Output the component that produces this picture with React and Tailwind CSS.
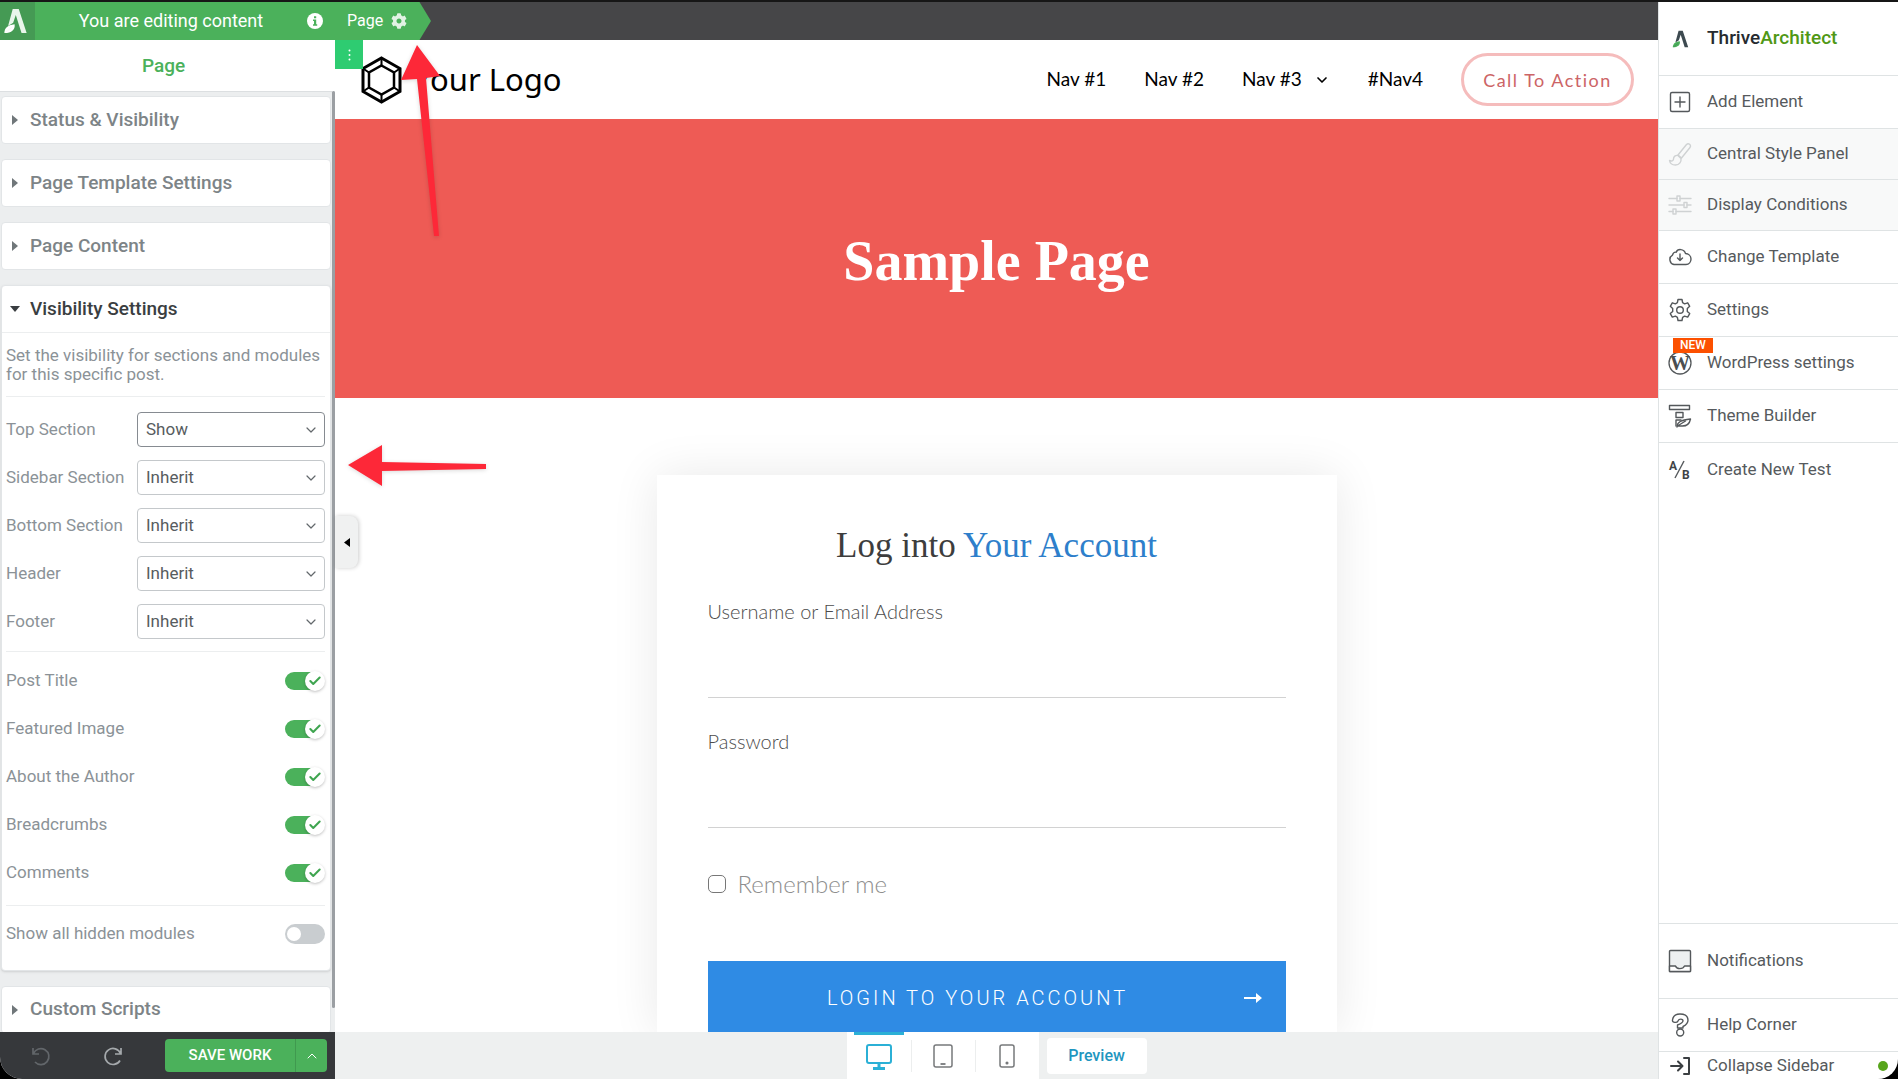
import { useState } from 'react';
import { FaCog } from 'react-icons/fa';
import { ChevronDown, ChevronUp, Check } from 'lucide-react';

const sections = ['Top Section', 'Sidebar Section', 'Bottom Section', 'Header', 'Footer'];
const modules = ['Post Title', 'Featured Image', 'About the Author', 'Breadcrumbs', 'Comments'];

function ThriveMark({ className, leaf }) {
  return (
    <svg className={className} viewBox="0 0 24 28" fill="currentColor">
      <path d="M9 1h6.500L24 27h-5.500L12.300 7.500 9.500 16l-5.500 3.500z" />
      <path className={leaf} d="M0 27c0-5 3-8.500 11-9.500 1 5.500-3 9.500-11 9.500z" />
      <path d="M1 26.500 8.500 20.500" stroke="currentColor" strokeWidth="0.800" opacity="0.500" />
    </svg>
  );
}

function Icon({ children, className = 'text-[#54585b]' }) {
  return (
    <svg className={`h-6 w-6 shrink-0 ${className}`} viewBox="0 0 24 24" fill="none" stroke="currentColor" strokeWidth="1.4" strokeLinecap="round" strokeLinejoin="round">
      {children}
    </svg>
  );
}

const menu = [
  {
    label: 'Add Element',
    icon: <Icon><rect x="2.5" y="2.5" width="19" height="19" rx="1.5" /><path d="M12 7v10M7 12h10" /></Icon>,
  },
  {
    label: 'Central Style Panel',
    disabled: true,
    icon: (
      <Icon className="text-[#cfd2d3]">
        <path d="M10 13 18.500 2.500c2-2 5 .5 3.500 3L13.500 16z" />
        <path d="M10 13.500c-2.500-.5-4.500 1-4.500 3.500 0 2-2 2.500-4 1.500.5 3 3 4.500 6 4.500 4 0 6-3.500 5.500-6.500z" />
      </Icon>
    ),
  },
  {
    label: 'Display Conditions',
    disabled: true,
    icon: (
      <Icon className="text-[#cfd2d3]">
        <path d="M1 5.500h8M12 5.500h11M1 12h15M19 12h4M1 18.500h4M8 18.500h15" />
        <rect x="9" y="3" width="3" height="5" /><rect x="16" y="9.500" width="3" height="5" /><rect x="5" y="16" width="3" height="5" />
      </Icon>
    ),
  },
  {
    label: 'Change Template',
    icon: (
      <Icon>
        <path d="M6 19.500a5 5 0 0 1-1.500-9.300C5 8 6.500 7 8.200 7.200 9.500 3.500 16 3.500 17.500 8.500c3 .2 5.500 2.500 5.500 5.500s-2 5.500-5 5.500z" />
        <path d="M12 9v6.500M9.500 13l2.500 2.500 2.500-2.500" />
      </Icon>
    ),
  },
  {
    label: 'Settings',
    icon: (
      <Icon>
        <circle cx="12" cy="12" r="3.300" />
        <path d="M10 1.500h4l.6 3.200 2 1.100 3.100-1 2 3.500-2.400 2.200v2.900l2.400 2.200-2 3.500-3.100-1-2 1.200-.6 3.200h-4l-.6-3.200-2-1.200-3.100 1-2-3.500 2.400-2.200v-2.900L2.300 8.300l2-3.500 3.100 1 2-1.100z" />
      </Icon>
    ),
  },
  {
    label: 'WordPress settings',
    isNew: true,
    icon: (
      <svg className="h-6 w-6 shrink-0 fill-[#4a4e51] font-['Liberation_Serif'] text-[20px] font-bold" viewBox="0 0 24 24">
        <circle cx="12" cy="12" r="11" fill="none" stroke="#54585b" strokeWidth="1.3" />
        <text x="12" y="19" textAnchor="middle">W</text>
      </svg>
    ),
  },
  {
    label: 'Theme Builder',
    icon: (
      <Icon>
        <path d="M1.500 1.500h20v4h-20zM8 8.500h7v5H8zM8 16v6M8 16h5" />
        <path d="M9 23c0-5 4-7 13.500-8-1 5-4 7.500-9.500 7H9.500l8-5" />
      </Icon>
    ),
  },
  {
    label: 'Create New Test',
    icon: (
      <svg className="h-6 w-6 shrink-0 fill-[#3f4346] font-[Roboto] text-[12px] font-bold" viewBox="0 0 24 24">
        <text x="1" y="12">A</text>
        <path d="M16 3 7 20" stroke="#54585b" strokeWidth="1.4" />
        <text x="14" y="21">B</text>
      </svg>
    ),
  },
];

function Accordion({ title }) {
  return (
    <section className="mx-px rounded-[4px] border border-[#e2e5e7] bg-white">
      <button className="flex h-[46px] w-full items-center gap-3 px-[10px] text-[19px] font-medium text-[#7d8487]">
        <svg className="h-[10px] w-[6px] fill-[#70777a]" viewBox="0 0 6 10"><path d="M0 0 6 5 0 10z" /></svg>
        {title}
      </button>
    </section>
  );
}

function Toggle({ id, checked, onChange }) {
  return (
    <span className="relative flex h-5 w-10 items-center">
      <input
        id={id}
        type="checkbox"
        checked={checked}
        onChange={onChange}
        className="h-5 w-10 appearance-none rounded-full bg-[#c9cdd0] checked:h-[18px] checked:w-9 checked:bg-[#4bb15b]"
      />
      {checked ? (
        <span className="pointer-events-none absolute right-0 flex h-5 w-5 items-center justify-center rounded-full bg-white shadow-[0_1px_3px_rgba(0,0,0,0.25)]">
          <Check className="h-[14px] w-[14px] text-[#3fa550]" strokeWidth={3.5} />
        </span>
      ) : (
        <span className="pointer-events-none absolute left-[2px] h-[14px] w-[14px] rounded-full bg-white" />
      )}
    </span>
  );
}

function SettingsPanel() {
  const [values, setValues] = useState({ 'Top Section': 'Show' });
  const [enabled, setEnabled] = useState(modules);
  const [showHidden, setShowHidden] = useState(false);

  const toggleModule = (name) => {
    setEnabled(enabled.includes(name) ? enabled.filter((m) => m !== name) : [...enabled, name]);
  };

  return (
    <aside className="flex w-[335px] shrink-0 flex-col rounded-bl-[22px] bg-white">
      <div className="flex h-[38px] shrink-0 items-center bg-[#4bb15b] text-white">
        <div className="flex h-full w-[35px] items-center justify-center bg-[#459a54] pr-1">
          <ThriveMark className="h-[26px] w-[23px] text-[#e9f5eb]" leaf="fill-white" />
        </div>
        <p className="flex-1 text-center text-lg">You are editing content</p>
        <button aria-label="Info" className="mr-3">
          <svg className="h-4 w-4" viewBox="0 0 16 16">
            <circle cx="8" cy="8" r="8" fill="white" />
            <path d="M7 3.200h2.200v2H7zM6 6.500h3.200v4.800h1v1.500H6v-1.500h1V8H6z" fill="#4bb15b" />
          </svg>
        </button>
      </div>
      <h2 className="h-[51px] shrink-0 pr-2 text-center text-[19px] leading-[52px] font-medium text-[#4bb15b]">Page</h2>

      <div className="flex min-h-0 flex-1 bg-[#eceeef]">
        <div className="flex min-w-0 flex-1 flex-col gap-[15px] overflow-hidden border-t border-[#dcdfe1] pt-1">
          <Accordion title="Status & Visibility" />
          <Accordion title="Page Template Settings" />
          <Accordion title="Page Content" />

          <section className="mx-px rounded-[4px] border border-[#e2e5e7] bg-white text-[#8b9297] shadow-sm">
            <button className="flex h-[47px] w-full items-center gap-[10px] border-b border-[#eceeef] px-2 text-[19px] font-medium text-[#3a3e41]">
              <svg className="h-[6px] w-[10px] fill-[#3a3e41]" viewBox="0 0 10 6"><path d="M0 0h10L5 6z" /></svg>
              Visibility Settings
            </button>
            <div className="pr-[5px] pl-1 text-[17px]">
              <p className="border-b border-[#eceeef] pt-[13px] pb-3 leading-[19px]">
                Set the visibility for sections and modules for this specific post.
              </p>
              <div className="flex flex-col gap-[13px] border-b border-[#eceeef] pt-[15px] pb-3">
                {sections.map((name) => (
                  <div key={name} className="flex h-[35px] items-center">
                    <label htmlFor={name} className="w-[131px] shrink-0">{name}</label>
                    <div className="relative flex-1">
                      <select
                        id={name}
                        value={values[name] || 'Inherit'}
                        onChange={(e) => setValues({ ...values, [name]: e.target.value })}
                        className={`h-[35px] w-full appearance-none rounded-[4px] border bg-white px-2 text-[17px] text-[#575c60] outline-none ${
                          values[name] ? 'border-[#868b91]' : 'border-[#c4c8cb]'
                        }`}
                      >
                        <option>Inherit</option>
                        <option>Show</option>
                        <option>Hide</option>
                      </select>
                      <ChevronDown className="pointer-events-none absolute top-[10px] right-[6px] h-4 w-4 text-[#63686c]" strokeWidth={1.8} />
                    </div>
                  </div>
                ))}
              </div>
              <div className="border-b border-[#eceeef] pt-[5px] pb-2">
                {modules.map((name) => (
                  <div key={name} className="flex h-12 items-center justify-between">
                    <label htmlFor={name}>{name}</label>
                    <Toggle id={name} checked={enabled.includes(name)} onChange={() => toggleModule(name)} />
                  </div>
                ))}
              </div>
              <div className="flex items-center justify-between pt-[15px] pb-[23px]">
                <label htmlFor="hidden-modules">Show all hidden modules</label>
                <Toggle id="hidden-modules" checked={showHidden} onChange={() => setShowHidden(!showHidden)} />
              </div>
            </div>
          </section>

          <Accordion title="Custom Scripts" />
        </div>
        <div className="mb-6 w-[3px] shrink-0 rounded-full bg-[#9b9fa3]" />
      </div>

      <div className="flex h-[47px] shrink-0 items-center rounded-bl-[22px] bg-[#36383b] pr-2">
        <button aria-label="Undo" className="ml-[31px] text-[#62666a]">
          <svg className="h-5 w-5" viewBox="0 0 20 20" fill="none" stroke="currentColor" strokeWidth="1.700">
            <path d="M2 2v6h6M2.500 7.500a8 8 0 1 1 1.500 8.500" />
          </svg>
        </button>
        <button aria-label="Redo" className="ml-[52px] text-[#a5a9ac]">
          <svg className="h-5 w-5" viewBox="0 0 20 20" fill="none" stroke="currentColor" strokeWidth="1.700">
            <path d="M18 2v6h-6M17.500 7.500a8 8 0 1 0-.5 7" />
          </svg>
        </button>
        <div className="ml-auto flex h-[33px] rounded-[4px] bg-[#4bb15b] text-white">
          <button className="w-[131px] border-r border-[#40994f] text-[15px] font-medium">SAVE WORK</button>
          <button aria-label="More save options" className="flex w-[31px] items-center justify-center"><ChevronUp className="h-4 w-4" strokeWidth={1.5} /></button>
        </div>
      </div>
    </aside>
  );
}

function SiteHeader() {
  return (
    <header className="relative flex h-[79px] shrink-0 items-center bg-white pr-6 pl-[26px] text-black">
      <button aria-label="Section menu" className="absolute top-0 left-0 flex h-[29px] w-7 items-center justify-center bg-[#2ecc71]">
        <svg className="h-3 w-[3px] fill-white" viewBox="0 0 3 12">
          <circle cx="1.500" cy="1.500" r="1" /><circle cx="1.500" cy="6" r="1" /><circle cx="1.500" cy="10.500" r="1" />
        </svg>
      </button>
      <a href="#" className="flex items-center gap-3 font-['Noto_Sans'] text-[31px]">
        <svg className="h-12 w-[41px]" viewBox="0 0 41 48" fill="none" stroke="black" strokeWidth="3">
          <path d="M20.500 2 39 12.500v23L20.500 46 2 35.500v-23z" />
          <path d="M20.500 9.500 33 16.500v15l-12.500 7-12.500-7v-15z" strokeWidth="2.500" />
          <path d="M20.500 2v7.500M39 12.500l-6 4M39 35.500l-6-4M20.500 46v-7.500M2 35.500l6-4M2 12.500l6 4" strokeWidth="2" />
        </svg>
        Your Logo
      </a>
      <nav className="ml-auto flex items-center gap-[38px] font-[Lato] text-[19px]">
        <a href="#">Nav #1</a>
        <a href="#">Nav #2</a>
        <a href="#" className="flex items-center gap-3">Nav #3 <ChevronDown className="h-4 w-4" strokeWidth={2.5} /></a>
        <a href="#">#Nav4</a>
        <a href="#" className="flex h-[53px] w-[173px] items-center justify-center rounded-[27px] border-[3px] border-[#f5bcbc] text-lg tracking-[1.5px] text-[#cc6466]">Call To Action</a>
      </nav>
    </header>
  );
}

function LoginForm() {
  return (
    <form className="mx-auto mt-[77px] w-[680px] max-w-full shrink-0 bg-white px-[51px] pt-12 font-[Lato] text-[#4c4c4c] shadow-[0_0_45px_rgba(0,0,0,0.09)]">
      <h2 className="text-center font-['Liberation_Serif'] text-[35px] leading-[46px] text-[#3d3d3d]">
        Log into <span className="text-[#2e7fcb]">Your Account</span>
      </h2>
      <label htmlFor="username" className="mt-7 block text-xl leading-7 font-light">Username or Email Address</label>
      <input id="username" type="text" className="h-[73px] w-full border-b border-[#d2d2d2] outline-none" />
      <label htmlFor="password" className="mt-[29px] block text-xl leading-7 font-light">Password</label>
      <input id="password" type="password" className="h-[73px] w-full border-b border-[#d2d2d2] outline-none" />
      <div className="mt-10 flex items-center gap-3 font-light text-[#8e8e8e]">
        <input id="remember" type="checkbox" className="h-[18px] w-[18px] appearance-none rounded-[5px] border border-[#777777]" />
        <label htmlFor="remember" className="text-2xl leading-8">Remember me</label>
      </div>
      <button type="button" className="mt-[61px] flex h-[74px] w-full items-center bg-[#2f8be4] pr-6 pl-1 text-white">
        <span className="flex-1 text-center font-[Roboto] text-xl font-light tracking-[3px]">LOGIN TO YOUR ACCOUNT</span>
        <svg className="h-3 w-[18px]" viewBox="0 0 18 12"><path d="M0 5h12V1l6 5-6 5V7H0z" fill="white" /></svg>
      </button>
    </form>
  );
}

function DeviceBar() {
  return (
    <footer className="flex h-[47px] shrink-0 items-center justify-center gap-2 bg-[#eef0f0]">
      <div className="grid h-full w-[192px] grid-cols-3 items-center bg-white">
        <button aria-label="Desktop" className="mx-[7px] flex h-full items-center justify-center border-t-[3px] border-[#2bb0d6] text-[#2bb0d6]">
          <svg className="h-[26px] w-[26px]" viewBox="0 0 26 26" fill="none" stroke="currentColor" strokeWidth="2">
            <rect x="1" y="1" width="24" height="18" rx="2" /><path d="M13 19v5M7 24.500h12" strokeWidth="3" />
          </svg>
        </button>
        <button aria-label="Tablet" className="flex h-8 items-center justify-center border-l border-[#eceeee] text-[#77797b]">
          <svg className="h-6 w-5" viewBox="0 0 20 24" fill="none" stroke="currentColor" strokeWidth="1.500">
            <rect x="1" y="1" width="18" height="22" rx="2" /><path d="M7.500 20h5" strokeWidth="1.800" />
          </svg>
        </button>
        <button aria-label="Mobile" className="flex h-8 items-center justify-center border-l border-[#eceeee] text-[#77797b]">
          <svg className="h-6 w-4" viewBox="0 0 16 24" fill="none" stroke="currentColor" strokeWidth="1.500">
            <rect x="1" y="1" width="14" height="22" rx="2" /><circle cx="8" cy="19" r="0.800" />
          </svg>
        </button>
      </div>
      <button className="h-9 w-[100px] rounded-[4px] bg-white text-base font-medium text-[#1f96c0]">Preview</button>
    </footer>
  );
}

function Sidebar() {
  return (
    <aside className="flex w-60 shrink-0 flex-col rounded-br-[20px] border-l border-[#dfe3e4] bg-white text-[17px] text-[#565a5d]">
      <div className="flex h-[74px] shrink-0 items-center gap-[18px] border-b border-[#dfe3e4] pl-[13px] text-[19px] font-medium text-[#262b2f]">
        <ThriveMark className="h-[18px] w-[17px] text-[#3d4a50]" leaf="fill-[#4bb15b]" />
        <span>Thrive<span className="text-[#509815]">Architect</span></span>
      </div>
      {menu.map((item, i) => (
        <button
          key={item.label}
          className={`relative flex shrink-0 items-center gap-[15px] border-[#dfe3e4] pl-[9px] text-left ${
            item.disabled ? 'h-[51px] bg-[#f8f9f9]' : 'h-[53px]'
          } ${i < menu.length - 1 ? 'border-b' : ''}`}
        >
          {item.icon}
          {item.label}
          {item.isNew && (
            <span className="absolute top-px left-[14px] w-10 bg-[#fc5000] text-center text-xs leading-[15px] font-medium text-white">NEW</span>
          )}
        </button>
      ))}

      <button className="mt-auto flex h-[75px] shrink-0 items-center gap-[15px] border-t border-[#dfe3e4] pl-[9px]">
        <Icon>
          <rect x="1.500" y="1.500" width="21" height="21" rx="1" fill="#edf0f1" />
          <path d="M1.500 17h6c1 3.500 7.500 3.500 9 0h6v5.500h-21z" fill="white" />
        </Icon>
        Notifications
      </button>
      <button className="flex h-[53px] shrink-0 items-center gap-[15px] border-t border-[#dfe3e4] pl-[9px]">
        <Icon>
          <path d="M4.500 7C5 3 8 1 12 1c5 0 8 2.500 8 6.300 0 3-1.500 4.500-5 6.200V15H9.500v-3c4-1.500 5.500-2.500 5.500-4.300 0-2-4-2.200-5 .3-.8 2-6 2-5.500-1z" />
          <circle cx="12.200" cy="19.500" r="3.500" />
        </Icon>
        Help Corner
      </button>
      <button className="flex h-7 shrink-0 items-center gap-[15px] border-t border-[#dfe3e4] pr-[10px] pl-[9px]">
        <Icon className="text-[#3b3f42]"><path d="M3 12h11M10 7.500l4.500 4.500-4.500 4.500M16 4h5v16h-5" strokeWidth="2" /></Icon>
        Collapse Sidebar
        <span className="ml-auto h-[10px] w-[10px] rounded-full bg-[#57a51b]" />
      </button>
    </aside>
  );
}

export default function App() {
  return (
    <div className="relative flex h-screen w-full overflow-hidden border-t-2 border-[#161616] bg-black font-[Roboto]">
      <SettingsPanel />

      <main className="relative flex min-w-0 flex-1 flex-col bg-white">
        <div className="flex h-[38px] shrink-0 bg-[#464648]">
          <button className="flex w-24 items-center gap-2 bg-[#4bb15b] pl-3 text-base text-white [clip-path:polygon(0_0,88%_0,100%_50%,88%_100%,0_100%)]">
            Page <FaCog className="h-4 w-4 text-[#e1f2e4]" />
          </button>
        </div>
        <SiteHeader />
        <div className="flex min-h-0 flex-1 flex-col overflow-hidden">
          <div className="flex h-[279px] shrink-0 items-center justify-center bg-[#ee5b55]">
            <h1 className="pt-1 font-['Liberation_Serif'] text-[56px] font-bold text-white">Sample Page</h1>
          </div>
          <LoginForm />
        </div>
        <DeviceBar />

        <button aria-label="Collapse panel" className="absolute top-[514px] left-0 flex h-[52px] w-[23px] items-center justify-center rounded-r-lg bg-[#f0f1f1] shadow-[1px_0_4px_rgba(0,0,0,0.2)]">
          <svg className="h-[9px] w-[6px]" viewBox="0 0 6 9"><path d="M6 0v9L0 4.500z" /></svg>
        </button>
        <svg className="pointer-events-none absolute top-[43px] left-[65px] h-[192px] w-[42px] fill-[#fd2838] drop-shadow-sm" viewBox="0 0 42 192">
          <path d="M17 0 40 31 26 33 39 191 34 191 17 34 1 35z" />
        </svg>
        <svg className="pointer-events-none absolute top-[442px] left-[13px] h-[44px] w-[140px] fill-[#fd2838] drop-shadow-sm" viewBox="0 0 140 44">
          <path d="M0 21 34 1v17l104 2v5L34 27v15z" />
        </svg>
      </main>

      <Sidebar />
    </div>
  );
}
